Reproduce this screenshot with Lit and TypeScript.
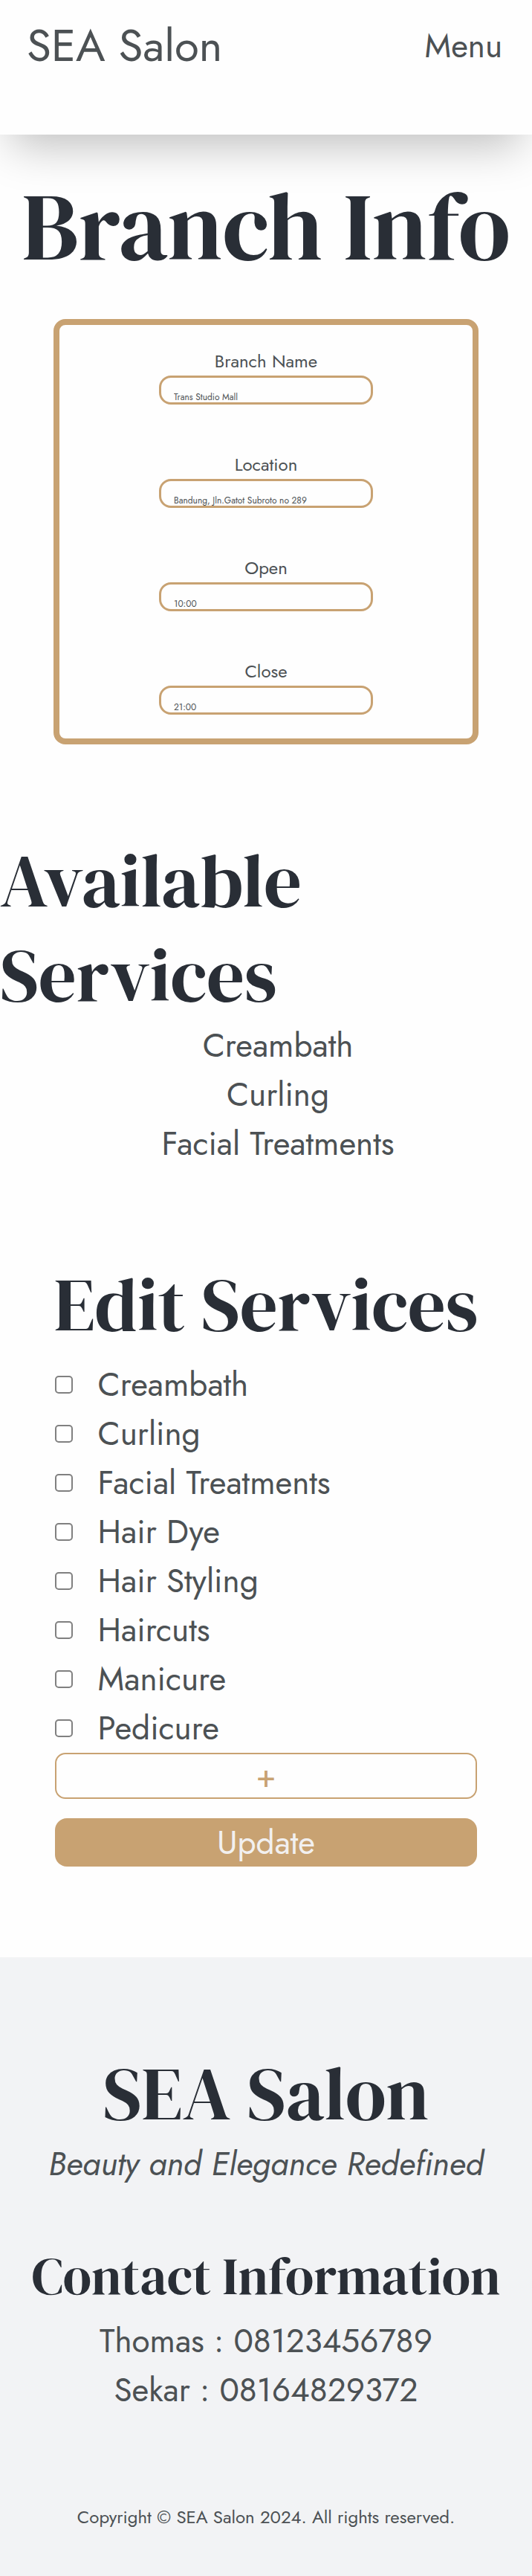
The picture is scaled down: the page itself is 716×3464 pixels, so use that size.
import { LitElement, html, css } from "lit";
import { customElement, state } from "lit/decorators.js";

interface Field {
  id: string;
  label: string;
  value: string;
}

@customElement("app-root")
export class AppRoot extends LitElement {
  static styles = css`
    :host {
      --ink: #292e36;
      --text: #4c5154;
      --gold: #c8a272;
      display: block;
      background: #fefefe;
      color: var(--text);
      font-family: Jost, Lato, sans-serif;
      font-size: 44px;
      line-height: 66px;
    }
    * {
      box-sizing: border-box;
    }
    h1,
    h2,
    h3,
    p,
    ul {
      margin: 0;
      padding: 0;
    }
    ul {
      list-style: none;
    }
    h1,
    h2,
    h3 {
      color: var(--ink);
      font-family: "DM Serif Display", "Liberation Serif", serif;
      font-weight: 400;
    }
    h1 {
      font-size: 128px;
      line-height: 166px;
      text-align: center;
    }
    h2 {
      font-size: 100px;
      line-height: 127px;
      margin-bottom: -2px;
    }
    h3 {
      font-size: 70px;
      line-height: 92px;
    }
    .header {
      display: flex;
      justify-content: space-between;
      align-items: center;
      padding: 17px 40px 74px 36px;
      box-shadow: 0 30px 60px -15px rgba(0, 0, 0, 0.25);
    }
    .header a {
      color: inherit;
      text-decoration: none;
    }
    .logo {
      font-size: 60px;
      line-height: 90px;
    }
    .menu {
      border: 0;
      padding: 0;
      background: none;
      color: inherit;
      font: inherit;
    }
    .info {
      padding-top: 40px;
    }
    .card {
      width: 80%;
      margin: 42px auto 0;
      padding: 30px 0 32px;
      border: 8px solid var(--gold);
      border-radius: 16px;
      display: flex;
      flex-direction: column;
      align-items: center;
      gap: 62px;
    }
    .field {
      width: 288px;
      max-width: 100%;
      display: flex;
      flex-direction: column;
    }
    .field label {
      font-size: 24px;
      line-height: 38px;
      text-align: center;
    }
    .field input {
      width: 100%;
      height: 39px;
      padding: 19px 17px 0;
      border: 3px solid var(--gold);
      border-radius: 16px;
      background: transparent;
      color: inherit;
      font-family: inherit;
      font-size: 12px;
      line-height: 14px;
    }
    .available {
      margin-top: 120px;
    }
    .available ul {
      padding-left: 32px;
      text-align: center;
    }
    .edit {
      width: 80%;
      margin: 120px auto 122px;
    }
    .edit h2 {
      margin-bottom: 11px;
      text-align: center;
      white-space: nowrap;
    }
    .edit form {
      display: flex;
      flex-direction: column;
      padding: 0 2px;
    }
    .option {
      display: flex;
      align-items: center;
      gap: 34px;
    }
    .option input {
      appearance: none;
      width: 24px;
      height: 24px;
      margin: 0;
      border: 2px solid #808080;
      border-radius: 5px;
      background: #fff;
    }
    .option input:checked {
      background: var(--gold);
    }
    .add,
    .update {
      width: 100%;
      padding: 0;
      font: inherit;
    }
    .add {
      height: 62px;
      border: 2px solid var(--gold);
      border-radius: 14px;
      background: transparent;
      color: var(--gold);
      line-height: 58px;
    }
    .update {
      height: 65px;
      margin-top: 26px;
      border: 0;
      border-radius: 16px;
      background: var(--gold);
      color: #f2f0ef;
    }
    .footer {
      padding: 120px 32px 61px;
      background: #f2f3f5;
      text-align: center;
    }
    .tagline {
      font-style: italic;
    }
    .contact {
      margin: 71px -32px 0;
    }
    .contact h3 {
      margin-bottom: 9px;
    }
    .copyright {
      margin-top: 120px;
      font-size: 24px;
      line-height: 36px;
    }
  `;

  @state() private fields: Field[] = [
    { id: "name", label: "Branch Name", value: "Trans Studio Mall" },
    { id: "location", label: "Location", value: "Bandung, Jln.Gatot Subroto no 289" },
    { id: "open", label: "Open", value: "10:00" },
    { id: "close", label: "Close", value: "21:00" },
  ];

  private available = ["Creambath", "Curling", "Facial Treatments"];

  private services = [
    "Creambath",
    "Curling",
    "Facial Treatments",
    "Hair Dye",
    "Hair Styling",
    "Haircuts",
    "Manicure",
    "Pedicure",
  ];

  render() {
    return html`
      <header class="header">
        <a class="logo" href="#">SEA Salon</a>
        <button class="menu" type="button">Menu</button>
      </header>
      <main>
        <section class="info">
          <h1>Branch Info</h1>
          <div class="card">
            ${this.fields.map(
              (f) => html`<div class="field">
                <label for=${f.id}>${f.label}</label>
                <input id=${f.id} type="text" .value=${f.value} />
              </div>`
            )}
          </div>
        </section>
        <section class="available">
          <h2>Available Services</h2>
          <ul>
            ${this.available.map((s) => html`<li>${s}</li>`)}
          </ul>
        </section>
        <section class="edit">
          <h2>Edit Services</h2>
          <form @submit=${(e: Event) => e.preventDefault()}>
            ${this.services.map(
              (s) => html`<label class="option"><input type="checkbox" name="service" value=${s} />${s}</label>`
            )}
            <button class="add" type="button" aria-label="Add service">+</button>
            <button class="update" type="submit">Update</button>
          </form>
        </section>
      </main>
      <footer class="footer">
        <h2>SEA Salon</h2>
        <p class="tagline">Beauty and Elegance Redefined</p>
        <div class="contact">
          <h3>Contact Information</h3>
          <p>Thomas : 08123456789</p>
          <p>Sekar : 08164829372</p>
        </div>
        <p class="copyright">Copyright © SEA Salon 2024. All rights reserved.</p>
      </footer>
    `;
  }
}
